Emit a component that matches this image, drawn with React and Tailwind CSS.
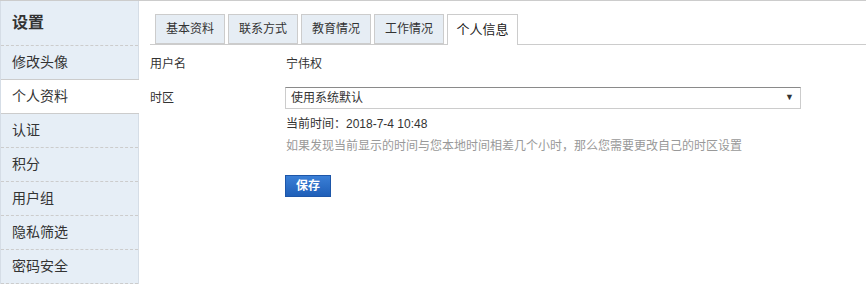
import React from "react";

const items = ["修改头像", "个人资料", "认证", "积分", "用户组", "隐私筛选", "密码安全"];
const tabs = ["基本资料", "联系方式", "教育情况", "工作情况", "个人信息"];

export default function App() {
  return (
    <div
      className="flex w-[866px] h-[284px] overflow-hidden bg-white border-t border-[#cccccc] text-[#333333]"
      style={{ fontFamily: '"Liberation Sans", "Noto Sans CJK SC", sans-serif' }}
    >
      <div className="w-[139px] shrink-0 bg-[#e6eef6] border-l border-r border-[#d5dde6] flex flex-col">
        <div className="h-[45px] shrink-0 border-b border-dashed border-[#cccccc] flex items-center pl-[11px] text-[16px] font-semibold text-[#333]">
          设置
        </div>
        {items.map((t, i) => (
          <div
            key={t}
            className={
              i === 1
                ? "h-[35px] shrink-0 -mt-px border-t border-b border-solid border-[#cccccc] bg-white -mr-px flex items-center pl-[11px] text-[14px] relative"
                : "h-[34px] shrink-0 border-b border-dashed border-[#cccccc] flex items-center pl-[11px] text-[14px]"
            }
          >
            {t}
          </div>
        ))}
      </div>
      <div className="flex-1 pl-[11px] pt-[13px]">
        <div className="flex border-b border-[#cccccc] pl-[5px] gap-[3px] h-[31px]">
          {tabs.map((t, i) => (
            <div
              key={t}
              className={
                i === 4
                  ? "w-[71px] h-[31px] border border-b-0 border-[#cccccc] bg-white flex items-center justify-center text-[13px] text-[#222]"
                  : "w-[70px] h-[30px] border border-[#cccccc] bg-[#e6edf4] flex items-center justify-center text-[12px] text-[#333]"
              }
            >
              {t}
            </div>
          ))}
        </div>
        <div className="flex items-center mt-[9px] h-[20px] text-[12px]">
          <div className="w-[136px]">用户名</div>
          <div className="text-[12px]">宁伟权</div>
        </div>
        <div className="flex items-center mt-[13px] h-[22px] text-[12px]">
          <div className="w-[135px]">时区</div>
          <div className="w-[516px] h-[22px] border border-[#cccccc] border-t-[#8a8a8a] flex items-center justify-between pl-[5px] pr-[6px] text-[12px]">
            <span>使用系统默认</span>
            <span className="text-[9px] text-[#333]">▼</span>
          </div>
        </div>
        <div className="ml-[136px] mt-[6px] h-[18px] flex items-center text-[12px] text-[#333]">
          当前时间：2018-7-4 10:48
        </div>
        <div className="ml-[136px] mt-[4px] h-[18px] flex items-center text-[12px] text-[#999999]">
          如果发现当前显示的时间与您本地时间相差几个小时，那么您需要更改自己的时区设置
        </div>
        <div className="ml-[135px] mt-[20px]">
          <button className="w-[46px] h-[22px] border border-[#1d56a8] bg-gradient-to-b from-[#3a7fd6] to-[#1f5fb8] text-white text-[12px] font-bold flex items-center justify-center">
            保存
          </button>
        </div>
      </div>
    </div>
  );
}
